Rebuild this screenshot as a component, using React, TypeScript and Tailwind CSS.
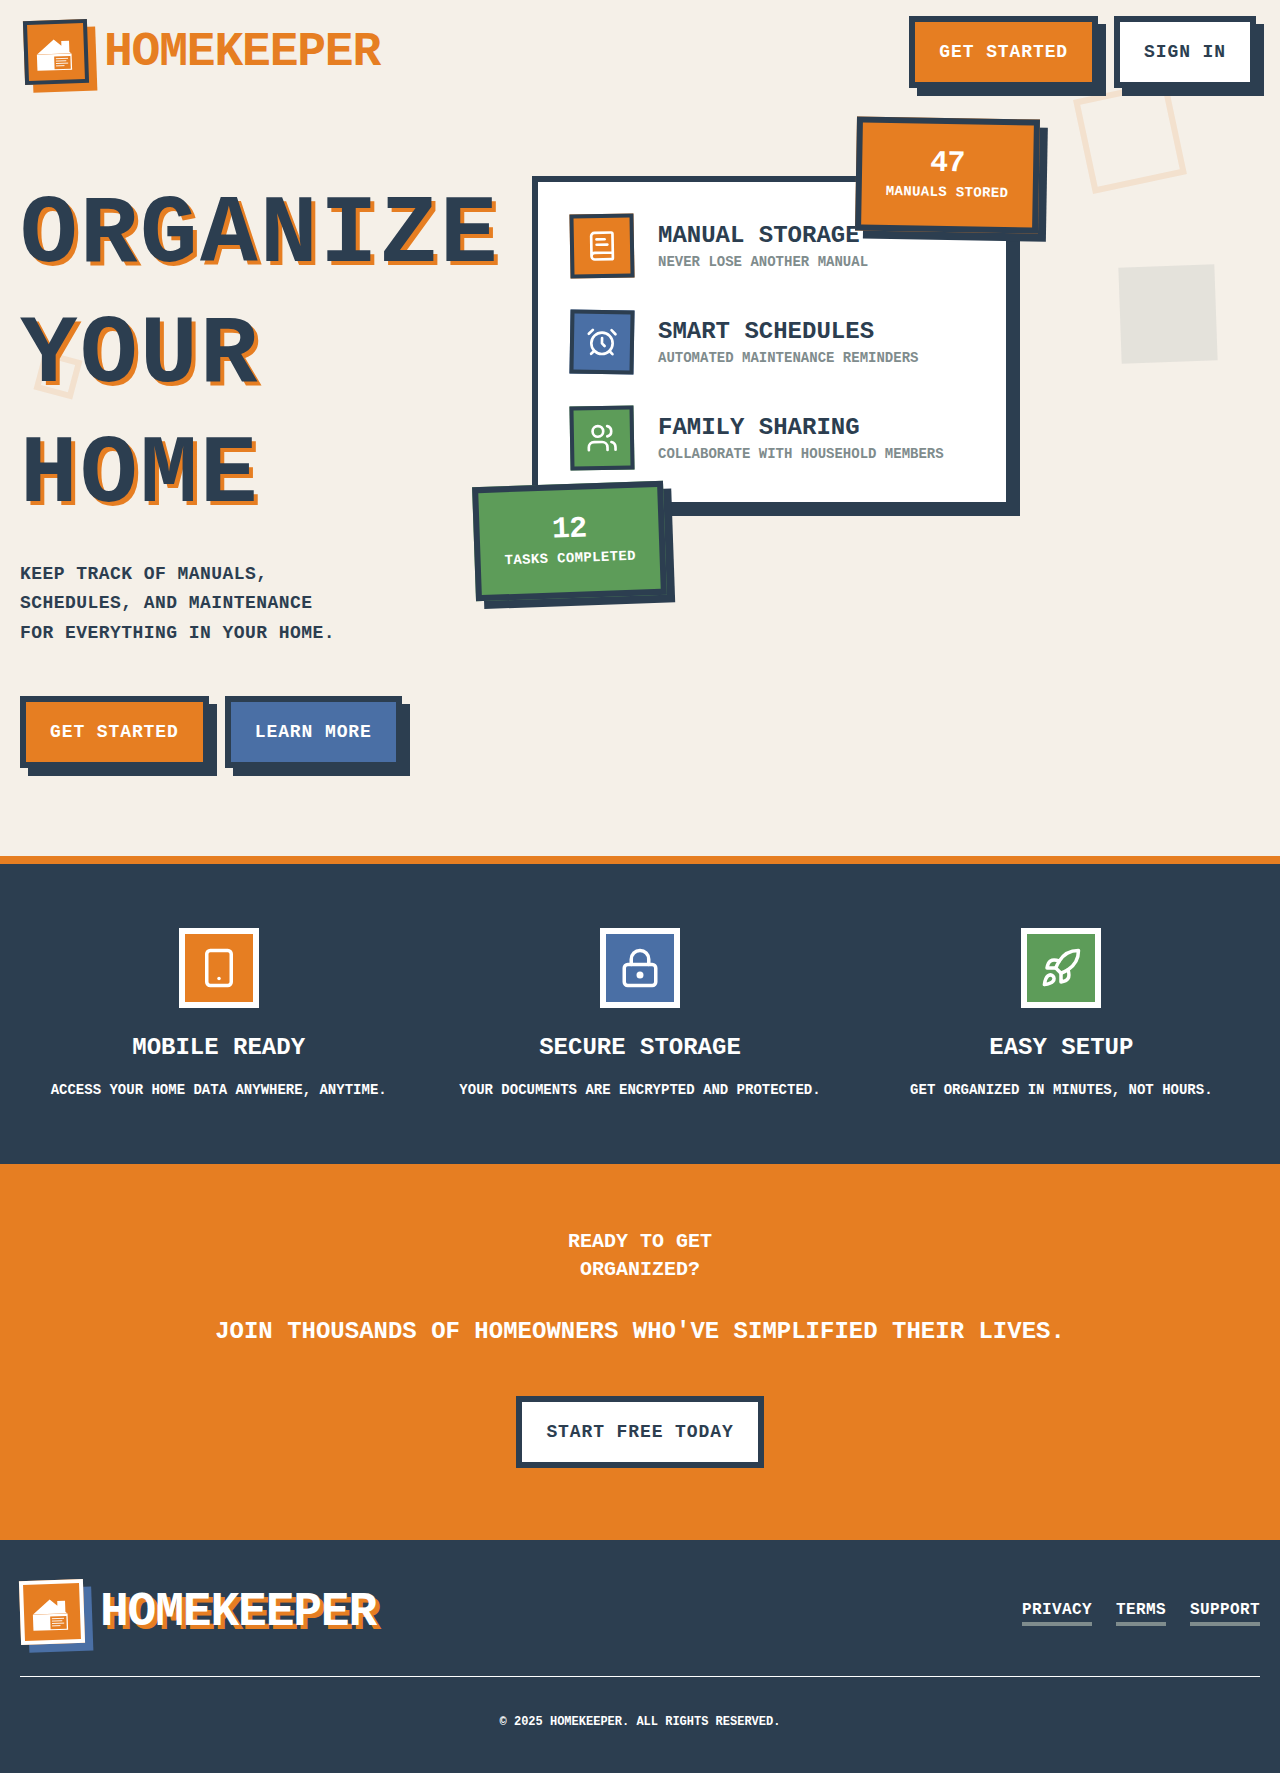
import React from "react";
import { AlarmClock, BookText, LockKeyhole, Rocket, Smartphone, Users } from "lucide-react";

function HouseMark() {
  return (
    <svg viewBox="0 0 40 40" className="h-10 w-10" fill="none">
      <path d="M1 21.800 18.100 7.400l7.500 6.600V9.200h7.800v10.900l1.600 1.700z" fill="#fff" />
      <path d="M.8 22H35.500V38.200H.8z" fill="#fff" />
      <rect x="18" y="24.400" width="16.200" height="12.900" fill="#e67e22" />
      <path
        d="M19.600 26.700h12.200M19.600 29.100h10.400M19.600 31.500h12.200M19.600 33.900h8.400"
        stroke="#fff"
        strokeWidth="0.9"
      />
    </svg>
  );
}

function Logo({ footer = false }: { footer?: boolean }) {
  return (
    <div className="flex items-center gap-4">
      <div
        className={
          footer
            ? "flex size-16 -rotate-2 items-center justify-center border-4 border-white bg-[#e67e22] shadow-[8px_8px_0_#4a6fa5]"
            : "flex size-16 -rotate-2 items-center justify-center border-4 border-[#2c3e50] bg-[#e67e22] shadow-[8px_8px_0_#e67e22]"
        }
      >
        <HouseMark />
      </div>
      <span
        className={
          footer
            ? "text-5xl leading-none tracking-tight text-white [text-shadow:4px_4px_0_#e67e22]"
            : "text-5xl leading-none tracking-tight text-[#e67e22]"
        }
      >
        HOMEKEEPER
      </span>
    </div>
  );
}

function Button({ children, className }: { children: React.ReactNode; className: string }) {
  return (
    <button
      className={`border-6 border-[#2c3e50] px-6 py-4 text-lg leading-7 font-bold tracking-wider whitespace-nowrap ${className}`}
    >
      {children}
    </button>
  );
}

const features = [
  { title: "MANUAL STORAGE", text: "NEVER LOSE ANOTHER MANUAL", icon: BookText, box: "-rotate-1 bg-[#e67e22]" },
  { title: "SMART SCHEDULES", text: "AUTOMATED MAINTENANCE REMINDERS", icon: AlarmClock, box: "rotate-1 bg-[#4a6fa5]" },
  { title: "FAMILY SHARING", text: "COLLABORATE WITH HOUSEHOLD MEMBERS", icon: Users, box: "-rotate-1 bg-[#5d9c59]" },
];

const benefits = [
  { title: "MOBILE READY", text: "ACCESS YOUR HOME DATA ANYWHERE, ANYTIME.", icon: Smartphone, box: "bg-[#e67e22]" },
  { title: "SECURE STORAGE", text: "YOUR DOCUMENTS ARE ENCRYPTED AND PROTECTED.", icon: LockKeyhole, box: "bg-[#4a6fa5]" },
  { title: "EASY SETUP", text: "GET ORGANIZED IN MINUTES, NOT HOURS.", icon: Rocket, box: "bg-[#5d9c59]" },
];

function Stat({ value, label, className }: { value: string; label: string; className: string }) {
  return (
    <div
      className={`absolute border-6 border-[#2c3e50] p-6 text-center whitespace-nowrap text-white shadow-[8px_8px_0_#2c3e50] ${className}`}
    >
      <div className="mb-1 text-3xl leading-none tracking-tight">{value}</div>
      <div className="text-sm tracking-wide">{label}</div>
    </div>
  );
}

export default function App() {
  return (
    <div className="relative w-full overflow-hidden bg-[#f5f0e8] font-['Liberation_Mono',monospace] font-bold text-[#2c3e50]">
      <div className="absolute top-[89px] left-[1082px] size-24 -rotate-12 border-6 border-[#e67e22] opacity-[0.13]" />
      <div className="absolute top-[266px] left-[1120px] size-24 -rotate-2 bg-[#2c3e50] opacity-[0.08]" />
      <div className="absolute top-[355px] left-[38px] size-10 rotate-[15deg] border-6 border-[#e67e22] opacity-[0.13]" />

      <header className="relative flex items-center justify-between px-6 py-4">
        <Logo />
        <div className="flex gap-4">
          <Button className="bg-[#e67e22] text-white shadow-[8px_8px_0_#2c3e50]">GET STARTED</Button>
          <Button className="bg-white shadow-[8px_8px_0_#2c3e50]">SIGN IN</Button>
        </div>
      </header>

      <main className="relative flex items-start gap-8 px-5 pt-[72px] pb-[88.25px]">
        <div className="w-[480px]">
          <h1 className="mb-6 text-[96px] leading-[1.25] tracking-wide [text-shadow:4px_4px_0_#e67e22]">
            ORGANIZE
            <br />
            YOUR
            <br />
            HOME
          </h1>
          <p className="mb-12 text-lg leading-relaxed tracking-wide">
            KEEP TRACK OF MANUALS,
            <br />
            SCHEDULES, AND MAINTENANCE
            <br />
            FOR EVERYTHING IN YOUR HOME.
          </p>
          <div className="flex gap-4">
            <Button className="bg-[#e67e22] text-white shadow-[8px_8px_0_#2c3e50]">GET STARTED</Button>
            <Button className="bg-[#4a6fa5] text-white shadow-[8px_8px_0_#2c3e50]">LEARN MORE</Button>
          </div>
        </div>

        <div className="relative w-[480px] border-6 border-[#2c3e50] bg-white p-8 shadow-[8px_8px_0_#2c3e50]">
          <div className="flex flex-col gap-8">
            {features.map(({ title, text, icon: Icon, box }) => (
              <div key={title} className="flex items-center gap-6">
                <div className={`flex size-16 items-center justify-center border-4 border-[#2c3e50] ${box}`}>
                  <Icon size={32} color="#fff" />
                </div>
                <div>
                  <h3 className="text-2xl">{title}</h3>
                  <p className="text-sm text-[#7f8c8d]">{text}</p>
                </div>
              </div>
            ))}
          </div>
          <Stat value="47" label="MANUALS STORED" className="-top-16 -right-[33px] rotate-1 bg-[#e67e22]" />
          <Stat value="12" label="TASKS COMPLETED" className="-bottom-24 -left-16 -rotate-2 bg-[#5d9c59]" />
        </div>
      </main>

      <section className="relative border-t-8 border-[#e67e22] bg-[#2c3e50] px-5 py-16 text-white">
        <div className="grid grid-cols-3 gap-6">
          {benefits.map(({ title, text, icon: Icon, box }) => (
            <div key={title} className="flex flex-col items-center text-center">
              <div className={`mb-6 flex size-20 items-center justify-center border-6 border-white ${box}`}>
                <Icon size={42} />
              </div>
              <h3 className="mb-4 text-2xl">{title}</h3>
              <p className="text-sm whitespace-nowrap">{text}</p>
            </div>
          ))}
        </div>
      </section>

      <section className="flex flex-col items-center bg-[#e67e22] px-5 pt-16 pb-[72px] text-center text-white">
        <h2 className="mb-8 text-xl leading-7">
          READY TO GET
          <br />
          ORGANIZED?
        </h2>
        <p className="mb-12 text-2xl">JOIN THOUSANDS OF HOMEOWNERS WHO'VE SIMPLIFIED THEIR LIVES.</p>
        <Button className="bg-white text-[#2c3e50]">START FREE TODAY</Button>
      </section>

      <footer className="bg-[#2c3e50] px-5 pt-10 pb-[39px] text-white">
        <div className="mb-8 flex items-center justify-between">
          <Logo footer />
          <nav className="flex gap-6 tracking-wide">
            <a className="border-b-4 border-[#7f8c8d]">PRIVACY</a>
            <a className="border-b-4 border-[#7f8c8d]">TERMS</a>
            <a className="border-b-4 border-[#7f8c8d]">SUPPORT</a>
          </nav>
        </div>
        <div className="border-t border-[#ffffff] pt-[33px] text-center text-xs leading-6">
          © 2025 HOMEKEEPER. ALL RIGHTS RESERVED.
        </div>
      </footer>
    </div>
  );
}
